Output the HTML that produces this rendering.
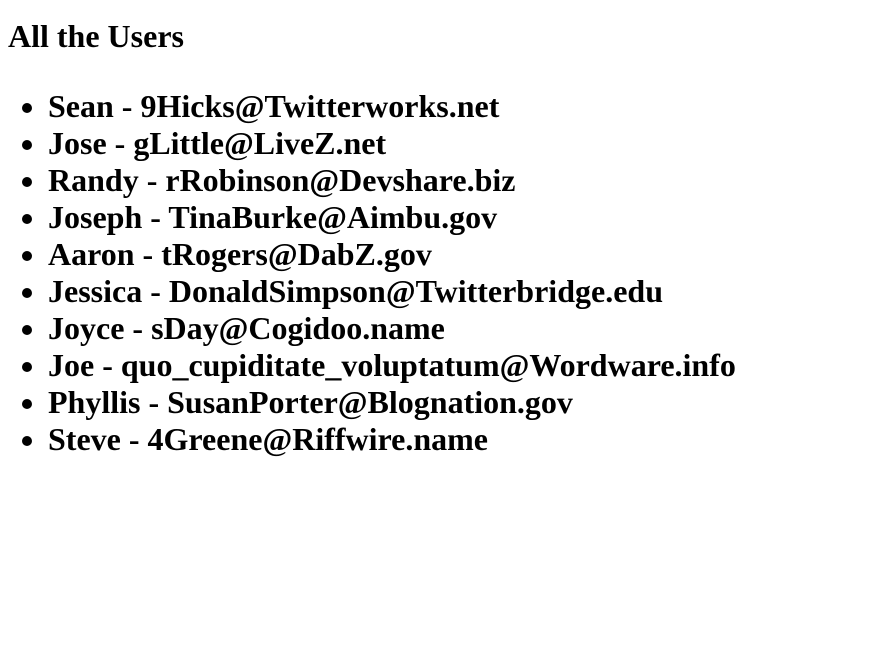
<!DOCTYPE html>
<html><head><meta charset="utf-8"><style>
html,body{margin:0;padding:0;background:#fff;}
body{font-family:"Liberation Serif",serif;color:#000;width:880px;height:651px;overflow:hidden;position:relative;}
h1{position:absolute;left:8px;top:18px;margin:0;font-size:32px;line-height:37px;font-weight:bold;}
ul{position:absolute;left:8px;top:88px;margin:0;padding-left:40px;font-size:32px;line-height:37px;font-weight:bold;}
li{white-space:nowrap;}
</style></head><body>
<h1>All the Users</h1>
<ul>
<li>Sean - 9Hicks@Twitterworks.net</li>
<li>Jose - gLittle@LiveZ.net</li>
<li>Randy - rRobinson@Devshare.biz</li>
<li>Joseph - TinaBurke@Aimbu.gov</li>
<li>Aaron - tRogers@DabZ.gov</li>
<li>Jessica - DonaldSimpson@Twitterbridge.edu</li>
<li>Joyce - sDay@Cogidoo.name</li>
<li>Joe - quo_cupiditate_voluptatum@Wordware.info</li>
<li>Phyllis - SusanPorter@Blognation.gov</li>
<li>Steve - 4Greene@Riffwire.name</li>
</ul>
</body></html>
